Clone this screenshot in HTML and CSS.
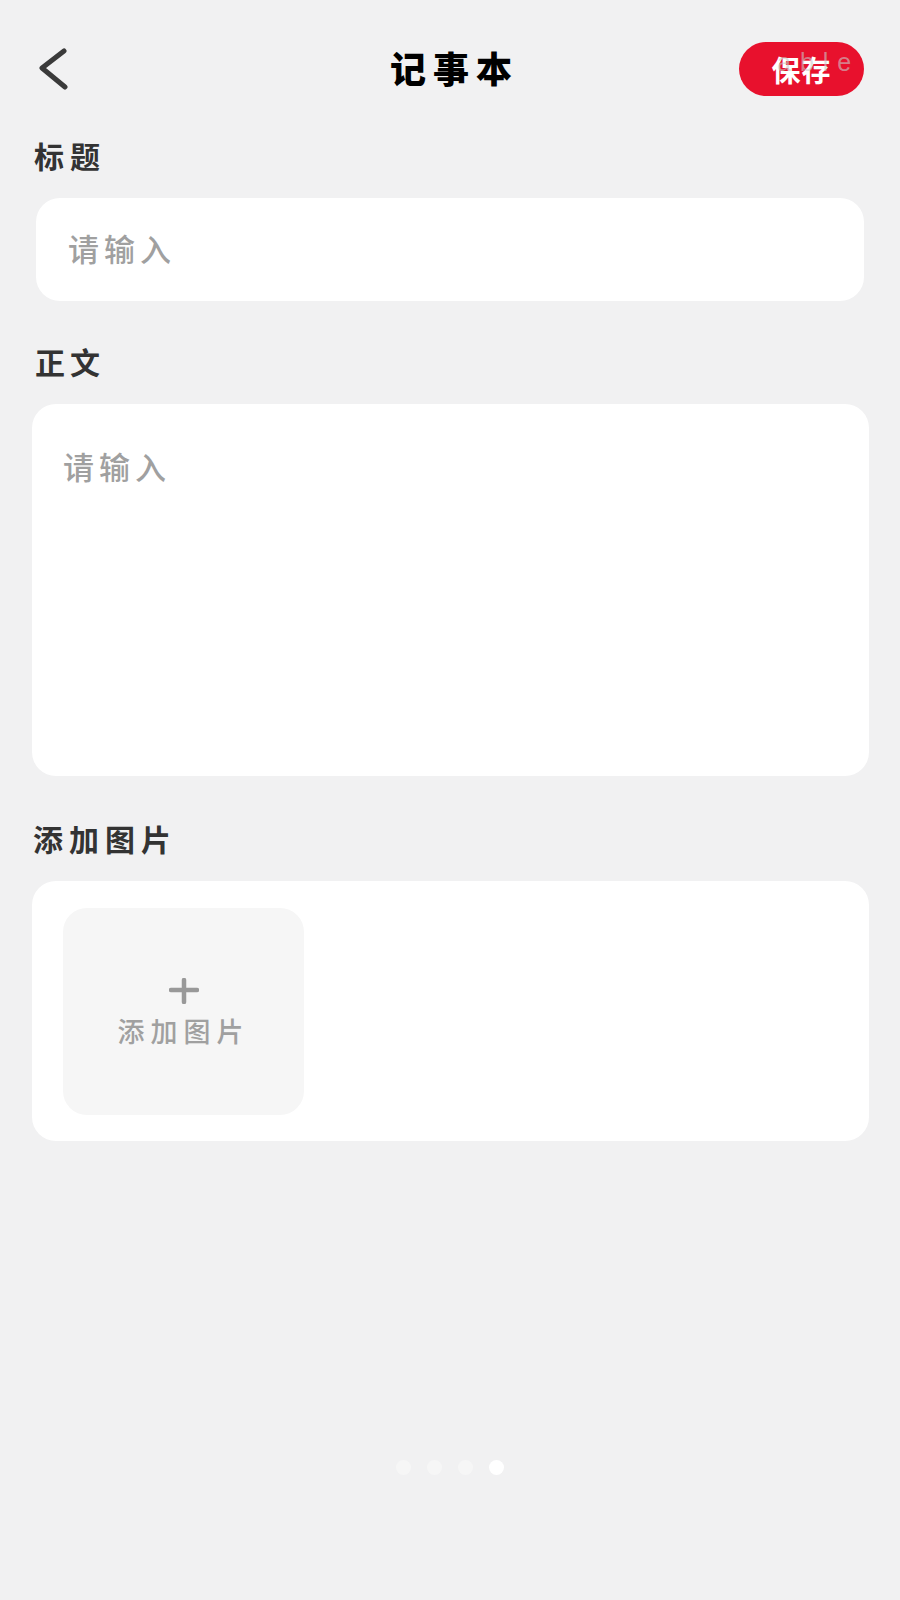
FILE: index.html
```html
<!DOCTYPE html>
<html lang="zh-CN">
<head>
  <meta charset="UTF-8">
  <meta name="viewport" content="width=device-width, initial-scale=1.0">
  <title>记事本</title>
  <link rel="stylesheet" href="styles.css">
</head>
<body>
  <header class="topbar">
    <a href="#" class="back">
      <svg width="30" height="42" viewBox="0 0 30 42" fill="none" stroke="#3a3a3a" stroke-width="5" stroke-linecap="round" stroke-linejoin="round">
        <path d="M26 3 L4 20 L27 39"/>
      </svg>
    </a>
    <h1>记事本</h1>
    <button class="save">
      <span class="save-text">保存</span>
      <span class="ghost">able</span>
    </button>
  </header>

  <main>
    <h2 class="label label-title">标题</h2>
    <div class="card card-title"><span class="hint">请输入</span></div>

    <h2 class="label label-body">正文</h2>
    <div class="card card-body"><span class="hint">请输入</span></div>

    <h2 class="label label-pics">添加图片</h2>
    <div class="card card-pics">
      <button class="add-tile">
        <svg width="30" height="26" viewBox="0 0 30 26" fill="none" stroke="#999" stroke-width="4.5" stroke-linecap="round">
          <path d="M2 12 H28 M15 2 V24"/>
        </svg>
        <span>添加图片</span>
      </button>
    </div>
  </main>

  <div class="dots">
    <span class="dot"></span>
    <span class="dot"></span>
    <span class="dot"></span>
    <span class="dot active"></span>
  </div>
</body>
</html>
```

FILE: styles.css
```css
:root {
  --bg: #f1f1f2;
  --red: #e8112d;
  --text-dark: #333;
  --hint: #a0a0a0;
}
body {
  font-family: 'Noto Sans CJK SC', 'Liberation Sans', sans-serif;
  background-color: var(--bg);
  color: var(--text-dark);
  margin: 0;
  height: 1600px;
  overflow: hidden;
}
.topbar {
  display: grid;
  grid-template-columns: 1fr auto 1fr;
  align-items: center;
  height: 54px;
  padding: 42px 36px 0 38px;
}
.back {
  display: flex;
}
h1 {
  margin: 0 -7px 0 0;
  padding-bottom: 4px;
  font-size: 36px;
  font-weight: 900;
  line-height: 50px;
  letter-spacing: 7px;
  color: #000;
}
.save {
  position: relative;
  justify-self: end;
  width: 125px;
  height: 54px;
  padding: 0;
  border: none;
  border-radius: 27px;
  background-color: var(--red);
  font-family: inherit;
}
.save-text {
  font-size: 29px;
  font-weight: 700;
  line-height: 54px;
  color: #fff;
  letter-spacing: 1px;
}
.ghost {
  position: absolute;
  top: -2px;
  left: 38px;
  font-family: 'Liberation Sans', sans-serif;
  font-size: 25px;
  line-height: 44px;
  letter-spacing: 9px;
  color: rgba(200, 200, 200, 0.6);
}
.label {
  margin: 0;
  font-size: 30px;
  font-weight: 700;
  line-height: 40px;
  letter-spacing: 6px;
}
.label-title {
  margin: 0 0 23px 34px;
  padding-top: 39px;
}
.label-body {
  margin: 40px 0 23px 35px;
  letter-spacing: 5px;
}
.label-pics {
  margin: 42px 0 23px 33px;
}
.card {
  background-color: #fff;
  border-radius: 24px;
  box-sizing: border-box;
}
.card-title {
  height: 103px;
  margin: 0 36px;
  padding: 30px 32px 0;
}
.card-body {
  height: 372px;
  margin: 0 31px 0 32px;
  padding: 42px 31px 0;
}
.card-pics {
  height: 260px;
  margin: 0 31px 0 32px;
  padding: 27px 31px;
}
.hint {
  display: block;
  font-size: 31px;
  font-weight: 500;
  line-height: 40px;
  letter-spacing: 5px;
  color: var(--hint);
}
.add-tile {
  display: flex;
  flex-direction: column;
  align-items: center;
  justify-content: center;
  gap: 9px;
  width: 241px;
  height: 207px;
  padding: 4px 0 0;
  border: none;
  border-radius: 24px;
  background-color: #f6f6f6;
  font-family: inherit;
  font-size: 27px;
  font-weight: 500;
  line-height: 36px;
  letter-spacing: 6px;
  color: var(--hint);
}
.dots {
  display: flex;
  justify-content: center;
  gap: 16px;
  margin-top: 319px;
}
.dot {
  width: 15px;
  height: 15px;
  border-radius: 50%;
  background-color: #f6f6f6;
}
.dot.active {
  background-color: #fff;
}
```
